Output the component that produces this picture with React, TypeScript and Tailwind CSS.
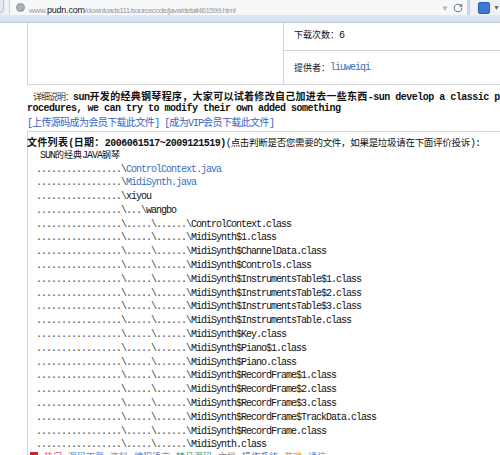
import React from "react";
import { RotateCw } from "lucide-react";

const CJK = /([\u2000-\u206f\u3000-\u9fff\uff00-\uffef]+)/;

// splits text into latin (mono, 5px per char) and CJK runs
function Mix({ s, cjk = "tracking-normal" }: { s: string; cjk?: string }) {
  return (
    <>
      {s.split(CJK).map((p, i) =>
        i % 2 ? (
          <span key={i} className={"font-['Noto_Sans_CJK_SC',sans-serif] " + cjk}>
            {p}
          </span>
        ) : (
          <span key={i}>{p}</span>
        )
      )}
    </>
  );
}

type Row = { pre: string; name: string; link?: boolean };

const D = ".................";
const rows: Row[] = [
  { pre: D + "\\", name: "ControlContext.java", link: true },
  { pre: D + "\\", name: "MidiSynth.java", link: true },
  { pre: D + "\\", name: "xiyou" },
  { pre: D + "\\...\\", name: "wangbo" },
  ...[
    "ControlContext.class",
    "MidiSynth$1.class",
    "MidiSynth$ChannelData.class",
    "MidiSynth$Controls.class",
    "MidiSynth$InstrumentsTable$1.class",
    "MidiSynth$InstrumentsTable$2.class",
    "MidiSynth$InstrumentsTable$3.class",
    "MidiSynth$InstrumentsTable.class",
    "MidiSynth$Key.class",
    "MidiSynth$Piano$1.class",
    "MidiSynth$Piano.class",
    "MidiSynth$RecordFrame$1.class",
    "MidiSynth$RecordFrame$2.class",
    "MidiSynth$RecordFrame$3.class",
    "MidiSynth$RecordFrame$TrackData.class",
    "MidiSynth$RecordFrame.class",
    "MidiSynth.class",
  ].map((n) => ({ pre: D + "\\.....\\......\\", name: n })),
];

function AddressBar() {
  return (
    <div className="h-[23px] flex flex-col">
      <div className="h-[15px] flex items-stretch bg-[#eef1f5]">
        <div className="w-[4px] mb-[2px] rounded-br-[4px] border-r border-b border-[#b7c3d3] bg-[#e3e9f1]" />
        <div className="ml-[5px] w-[458px] flex items-center bg-[#f7f8fa] border-l border-[#c9d3df] pl-[6px]">
          <div className="w-[9px] h-[9px] rounded-full bg-[#a9afb7] border border-[#8f959d]" />
          <div className="ml-[4px] leading-none font-['Liberation_Sans',sans-serif] text-[#9a9a9a] whitespace-nowrap">
            <span className="text-[8px] tracking-[-0.3px]">www.</span>
            <span className="text-[9px] text-[#222] tracking-[-0.2px]">pudn.com</span>
            <span className="text-[8px] tracking-[-0.6px]">/downloads111/sourcecode/java/detail461599.html</span>
          </div>
          <div className="ml-auto flex items-center gap-[4px] pr-[4px]">
            <span className="text-[8px] leading-none text-[#b5b5b5]">▼</span>
            <RotateCw size={10} strokeWidth={2.5} className="text-[#6f7680]" />
          </div>
        </div>
        <div className="w-[3px] bg-[#d6dde7] border-x border-[#c3ccd8]" />
        <div className="flex items-center pl-[8px] gap-[3px]">
          <div className="w-[12px] h-[12px] rounded-[2px] bg-[#3b78d8] border border-[#2a5fb4]" />
          <span className="text-[7px] leading-none text-[#666]">▼</span>
        </div>
      </div>
      <div className="h-[8px] bg-gradient-to-b from-[#dfe8f2] to-[#d3dfec] border-b border-[#bccadb]" />
    </div>
  );
}

export default function App() {
  const mono = "font-['Liberation_Mono',monospace] text-[10px] tracking-[-1px]";
  return (
    <div className="w-[500px] h-[455px] overflow-hidden bg-white text-[#111]">
      <AddressBar />
      <div className="ml-[27px] w-[800px]">
        <div className="flex border-l border-b border-[#d4d4d4] h-[62px]">
          <div className="w-[255px]" />
          <div className="flex flex-col border-l border-[#d4d4d4] w-[300px]">
            <div className={"h-[28px] flex items-center pl-[10px] pb-[3px] border-b border-[#d4d4d4] " + mono}>
              <Mix s="下载次数：6" cjk="tracking-normal text-[9px]" />
            </div>
            <div className={"flex-1 flex items-center pl-[10px] " + mono}>
              <Mix s="提 供 者：" cjk="tracking-normal text-[9px]" />
              <span className="text-[#3a6fb5]">liuweiqi</span>
            </div>
          </div>
        </div>

        <div className={"pt-[4px] pb-[3px] border-b border-[#d4d4d4] " + mono}>
          <div className="h-[13px] leading-[13px] pl-[6px] whitespace-nowrap">
            <span className="text-[#444]">
              <Mix s="详细说明：" cjk="tracking-[-1px] text-[9px]" />
            </span>
            <span className="font-bold tracking-[-0.5px]">
              <Mix s="sun开发的经典钢琴程序，大家可以试着修改自己加进去一些东西-sun develop a classic piano p" cjk="tracking-[0.3px]" />
            </span>
          </div>
          <div className="h-[13px] leading-[13px] font-bold tracking-[-0.5px] whitespace-nowrap">
            rocedures, we can try to modify their own added something
          </div>
          <div className="h-[13px] leading-[13px] text-[#3762c4] whitespace-nowrap">
            <Mix s="[上传源码成为会员下载此文件]" cjk="tracking-[-0.6px] text-[10px]" />{" "}
            <Mix s="[成为VIP会员下载此文件]" cjk="tracking-[-0.6px] text-[10px]" />
          </div>
        </div>

        <div className={"border-l border-[#d4d4d4] pt-[3px] " + mono}>
          <div className="h-[13px] leading-[13px] whitespace-nowrap -ml-px">
            <span className="font-bold tracking-[-0.5px]">
              <Mix s="文件列表(日期：2006061517~2009121519)" cjk="tracking-[0.3px]" />
            </span>
            <Mix s="(点击判断是否您需要的文件，如果是垃圾请在下面评价投诉):" cjk="tracking-[-0.3px] text-[9.5px]" />
          </div>
          <div className="h-[13px] leading-[13px] pl-[12px] whitespace-nowrap">
            <Mix s="SUN的经典JAVA钢琴" cjk="tracking-normal text-[9px]" />
          </div>
          <div className="pt-[1.5px] pl-[8px]">
            {rows.map((r, i) => (
              <div key={i} className="h-[13.8px] leading-[13.8px] whitespace-nowrap">
                <span className="text-[#444]">{r.pre}</span>
                <span className={r.link ? "text-[#3a6fc4]" : "text-[#111]"}>{r.name}</span>
                {i === rows.length - 1 && (
                  <span className="inline-block align-top ml-[274px] mt-[10px] w-[40px] h-[10px] bg-[#7d8aa6]" />
                )}
              </div>
            ))}
          </div>
          <div className="flex items-start h-[14px] pl-[2px] text-[9px] leading-none font-['Noto_Sans_CJK_SC',sans-serif] tracking-normal">
            <div className="w-[430px] flex items-start gap-[6px] overflow-hidden">
              <span className="w-[8px] h-[6px] bg-[#d2232a]" />
              <span className="text-[#e2478a]">热门</span>
              <span className="text-[#4a7bd0]">源码下载</span>
              <span className="text-[#888]">资料</span>
              <span className="text-[#3b64c0]">编程语言</span>
              <span className="text-[#2e8b57]">精品源码</span>
              <span className="text-[#888]">文档</span>
              <span className="text-[#3b64c0]">操作系统</span>
              <span className="text-[#c8a200]">游戏</span>
              <span className="text-[#4a7bd0]">通信</span>
            </div>
          </div>
        </div>
      </div>
    </div>
  );
}
